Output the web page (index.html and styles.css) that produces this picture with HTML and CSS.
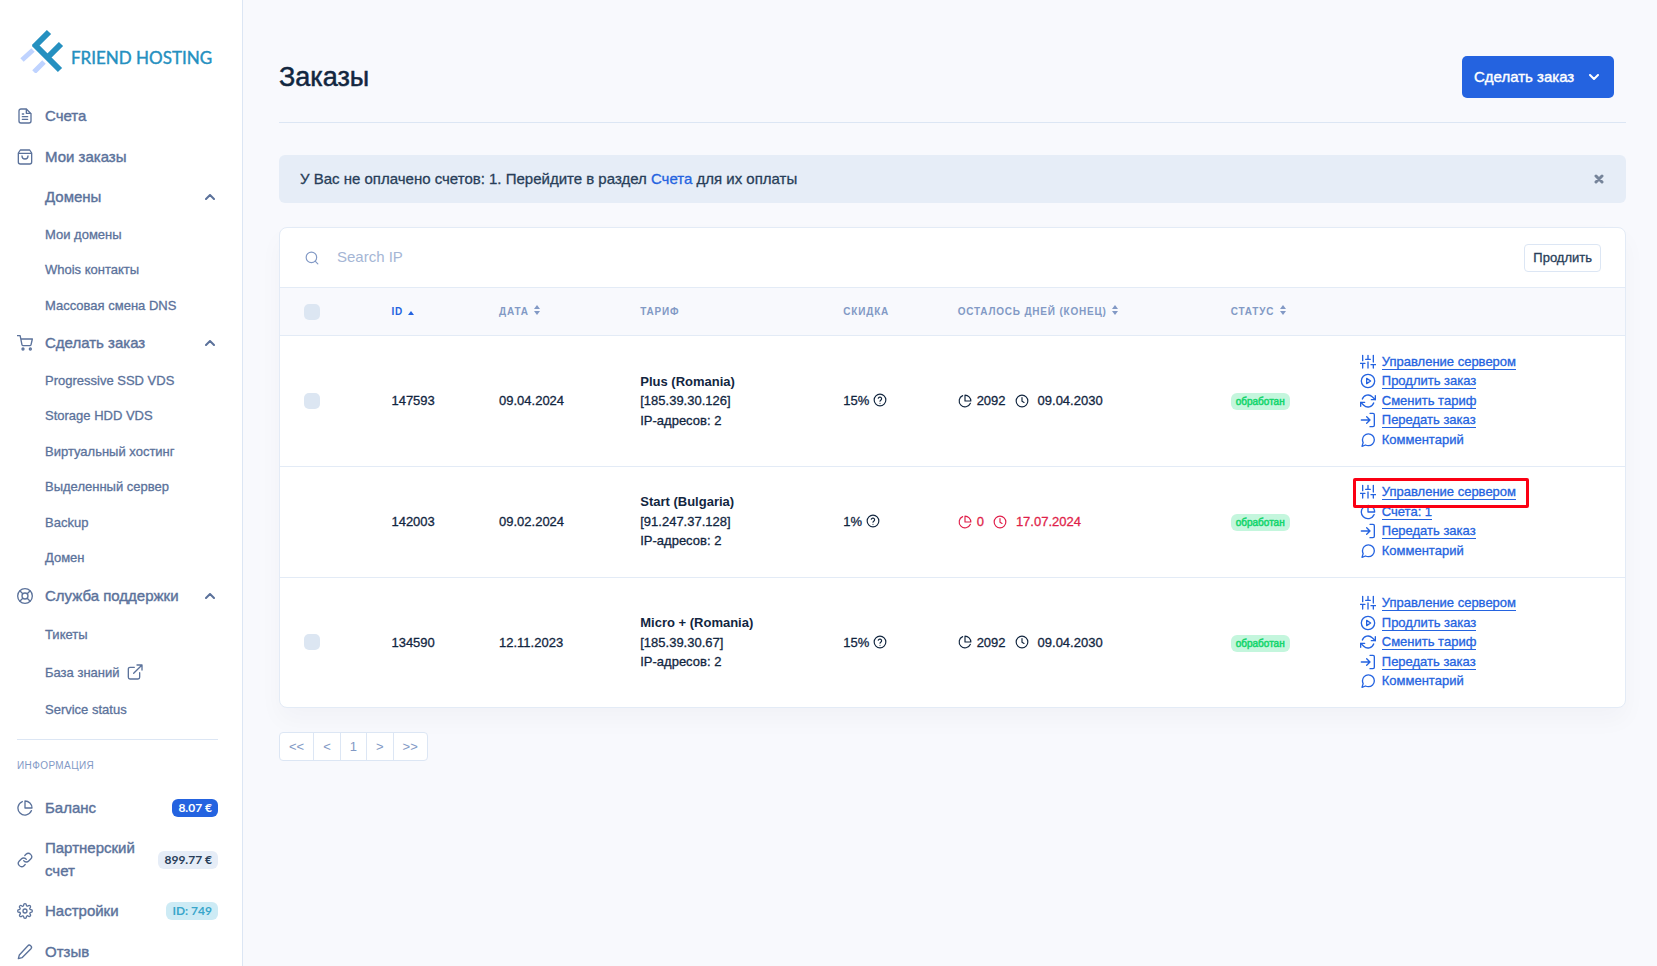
FILE: index.html
```html
<!DOCTYPE html>
<html lang="ru">
<head>
<meta charset="utf-8">
<meta name="viewport" content="width=device-width, initial-scale=1">
<title>Заказы</title>
<link rel="stylesheet" href="styles.css">
</head>
<body>
<svg class="sprite" aria-hidden="true">
  <symbol id="file" viewBox="0 0 24 24"><path d="M14 1.500H6a3 3 0 0 0-3 3v15a3 3 0 0 0 3 3h12a3 3 0 0 0 3-3v-11z"/><path d="M14 2v6h6.500M16 13H8M16 17H8M10 9H8"/></symbol>
  <symbol id="bag" viewBox="0 0 24 24"><path d="M5 1.500h14l3 4.500v13.500a3 3 0 0 1-3 3H5a3 3 0 0 1-3-3V6zM2 6.500h20M16.500 10.500a4.500 4.500 0 0 1-9 0"/></symbol>
  <symbol id="cart" viewBox="0 0 24 24"><circle cx="9" cy="21" r="1.500"/><circle cx="20" cy="21" r="1.500"/><path d="M.5 1h4.200l2.700 13.400a2 2 0 0 0 2 1.600h9.700a2 2 0 0 0 2-1.600L23 6H6"/></symbol>
  <symbol id="buoy" viewBox="0 0 24 24"><circle cx="12" cy="12" r="11"/><circle cx="12" cy="12" r="4.500"/><path d="M4.500 4.500l4.200 4.200M15.300 15.300l4.200 4.200M15.300 8.700l4.200-4.200M4.500 19.500l4.200-4.200"/></symbol>
  <symbol id="external" viewBox="0 0 24 24"><path d="M19 13v7a2.500 2.500 0 0 1-2.500 2.500h-12A2.500 2.500 0 0 1 2 20V7.500A2.500 2.500 0 0 1 4.500 5H11M15 1.500h7.500V9M10 14L22.500 1.500"/></symbol>
  <symbol id="balance" viewBox="0 0 24 24"><path d="M21.700 15.900A10.500 10.500 0 1 1 8 2.300M22.500 12A10.500 10.500 0 0 0 12 1.500V12z"/></symbol>
  <symbol id="pie" viewBox="0 0 24 24"><path d="M21.210 15.890A10 10 0 1 1 8 2.830M22 12A10 10 0 0 0 12 2v10z"/></symbol>
  <symbol id="link" viewBox="0 0 24 24"><path d="M10 13a5 5 0 0 0 7.540.54l3-3a5 5 0 0 0-7.070-7.070l-1.720 1.710"/><path d="M14 11a5 5 0 0 0-7.540-.54l-3 3a5 5 0 0 0 7.070 7.070l1.710-1.710"/></symbol>
  <symbol id="gear" viewBox="0 0 24 24"><circle cx="12" cy="12" r="3"/><path d="M19.400 15a1.650 1.650 0 0 0 .33 1.820l.06.06a2 2 0 1 1-2.830 2.830l-.06-.06a1.650 1.650 0 0 0-2.800 1.170V21a2 2 0 0 1-4 0v-.09a1.650 1.650 0 0 0-2.910-1.080l-.06.06a2 2 0 1 1-2.830-2.830l.06-.06A1.650 1.650 0 0 0 3.090 14H3a2 2 0 0 1 0-4h.09A1.650 1.650 0 0 0 4.270 7.180l-.06-.06a2 2 0 1 1 2.830-2.830l.06.06A1.650 1.650 0 0 0 10 3.090V3a2 2 0 0 1 4 0v.09a1.650 1.650 0 0 0 2.820 1.170l.06-.06a2 2 0 1 1 2.830 2.830l-.06.06A1.650 1.650 0 0 0 20.910 10H21a2 2 0 0 1 0 4h-.09a1.650 1.650 0 0 0-1.510 1z"/></symbol>
  <symbol id="pencil" viewBox="0 0 24 24"><path d="M16 3a2.800 2.800 0 0 1 5 4L7.500 20.500 2 22l1.500-5.500z"/></symbol>
  <symbol id="search" viewBox="0 0 24 24"><circle cx="11" cy="11" r="9"/><path d="M22 22l-4.600-4.600"/></symbol>
  <symbol id="help" viewBox="0 0 24 24"><circle cx="12" cy="12" r="10"/><path d="M9 9a3 3 0 0 1 5.800 1c0 2-2.800 2.500-2.800 4M12 17.500v.1"/></symbol>
  <symbol id="clock" viewBox="0 0 24 24"><circle cx="12" cy="12" r="10"/><path d="M12 6v6.500l3.500 2"/></symbol>
  <symbol id="sliders" viewBox="0 0 24 24"><path d="M4 21v-7M4 10V2M12 21v-9M12 8V2M20 21v-5M20 12V2M.5 14h7M8.500 8h7M16.500 16h7"/></symbol>
  <symbol id="play" viewBox="0 0 24 24"><circle cx="12" cy="12" r="10"/><path d="M10 8l6 4-6 4z"/></symbol>
  <symbol id="refresh" viewBox="0 0 24 24"><path d="M23 4v6h-6M1 20v-6h6"/><path d="M3.510 9a9 9 0 0 1 14.850-3.360L23 10M1 14l4.640 4.360A9 9 0 0 0 20.490 15"/></symbol>
  <symbol id="login" viewBox="0 0 24 24"><path d="M15 2h4.500a2 2 0 0 1 2 2v16a2 2 0 0 1-2 2H15M10 17l5-5-5-5M15 12H2"/></symbol>
  <symbol id="comment" viewBox="0 0 24 24"><path d="M21.500 11.500a9 9 0 0 1-9 9 9.400 9.400 0 0 1-4.200-1L3 21.500l1.700-5.600a9 9 0 0 1-1-4.100 9 9 0 0 1 8.800-9.100 9 9 0 0 1 9 8.800z"/></symbol>
  <symbol id="up" viewBox="0 0 10 6"><path d="M1 5l4-4 4 4"/></symbol>
  <symbol id="down" viewBox="0 0 10 6"><path d="M1 1l4 4 4-4"/></symbol>
  <symbol id="sort" viewBox="0 0 6 10"><path class="solid" d="M3 0l3 4H0zM3 10L0 6h6z"/></symbol>
  <symbol id="sort-up" viewBox="0 0 6 4"><path class="solid" d="M3 0l3 4H0z"/></symbol>
</svg>

<div class="layout">
  <aside class="sidebar">
    <a class="logo" href="#">
      <svg class="logo-mark" viewBox="0 0 44 44" aria-hidden="true">
        <g stroke="#bfd3ff" stroke-width="5"><path d="M2 31l11-10M14 43l10-10"/></g>
        <g stroke="#2590c0" stroke-width="6"><path d="M29 3L14 18M41 15L28 28M14 15l26 26"/></g>
      </svg>
      <span>FRIEND HOSTING</span>
    </a>
    <nav class="nav" aria-label="Меню">
      <a class="item" href="#"><svg class="icon"><use href="#file"/></svg><span>Счета</span></a>
      <a class="item" href="#"><svg class="icon"><use href="#bag"/></svg><span>Мои заказы</span></a>
      <button class="item" type="button" aria-expanded="true"><i class="icon"></i><span>Домены</span><svg class="caret"><use href="#up"/></svg></button>
      <a class="sub" href="#">Мои домены</a>
      <a class="sub" href="#">Whois контакты</a>
      <a class="sub" href="#">Массовая смена DNS</a>
      <button class="item" type="button" aria-expanded="true"><svg class="icon"><use href="#cart"/></svg><span>Сделать заказ</span><svg class="caret"><use href="#up"/></svg></button>
      <a class="sub" href="#">Progressive SSD VDS</a>
      <a class="sub" href="#">Storage HDD VDS</a>
      <a class="sub" href="#">Виртуальный хостинг</a>
      <a class="sub" href="#">Выделенный сервер</a>
      <a class="sub" href="#">Backup</a>
      <a class="sub" href="#">Домен</a>
      <button class="item" type="button" aria-expanded="true"><svg class="icon"><use href="#buoy"/></svg><span>Служба поддержки</span><svg class="caret"><use href="#up"/></svg></button>
      <a class="sub tall" href="#">Тикеты</a>
      <a class="sub tall" href="#">База знаний <svg class="icon"><use href="#external"/></svg></a>
      <a class="sub tall" href="#">Service status</a>
    </nav>
    <h2 class="section">Информация</h2>
    <nav class="nav" aria-label="Информация">
      <a class="item" href="#"><svg class="icon"><use href="#balance"/></svg><span>Баланс</span><b class="pill primary">8.07 €</b></a>
      <a class="item" href="#"><svg class="icon"><use href="#link"/></svg><span>Партнерский счет</span><b class="pill soft">899.77 €</b></a>
      <a class="item" href="#"><svg class="icon"><use href="#gear"/></svg><span>Настройки</span><b class="pill info">ID: 749</b></a>
      <a class="item" href="#"><svg class="icon"><use href="#pencil"/></svg><span>Отзыв</span></a>
    </nav>
  </aside>

  <main class="main">
    <header class="header">
      <h1>Заказы</h1>
      <button class="order" type="button">Сделать заказ <svg class="caret"><use href="#down"/></svg></button>
    </header>

    <div class="alert" role="alert">
      <p>У Вас не оплачено счетов: 1. Перейдите в раздел <a href="#">Счета</a> для их оплаты</p>
      <button class="close" type="button" aria-label="Закрыть"><svg viewBox="0 0 10 10"><path d="M2 2l6 6M8 2L2 8"/></svg></button>
    </div>

    <section class="card">
      <div class="toolbar">
        <label for="ip" aria-label="Search IP"><svg class="icon"><use href="#search"/></svg></label>
        <input id="ip" type="text" placeholder="Search IP">
        <button class="renew" type="button">Продлить</button>
      </div>
      <table>
        <colgroup><col class="c-check"><col class="c-id"><col class="c-date"><col class="c-plan"><col class="c-sale"><col class="c-days"><col class="c-status"><col></colgroup>
        <thead>
          <tr>
            <th><input type="checkbox" aria-label="Выбрать все"></th>
            <th class="sorted">ID <svg class="sort one"><use href="#sort-up"/></svg></th>
            <th>Дата <svg class="sort"><use href="#sort"/></svg></th>
            <th>Тариф</th>
            <th>Скидка</th>
            <th>Осталось дней (конец) <svg class="sort"><use href="#sort"/></svg></th>
            <th>Статус <svg class="sort"><use href="#sort"/></svg></th>
            <th></th>
          </tr>
        </thead>
        <tbody>
          <tr>
            <td><input type="checkbox" aria-label="147593"></td>
            <td>147593</td>
            <td>09.04.2024</td>
            <td><strong>Plus (Romania)</strong><br>[185.39.30.126]<br>IP-адресов: 2</td>
            <td>15% <svg class="mini"><use href="#help"/></svg></td>
            <td><div class="term"><svg class="mini"><use href="#pie"/></svg><span>2092</span><svg class="mini"><use href="#clock"/></svg><span>09.04.2030</span></div></td>
            <td><span class="status">обработан</span></td>
            <td>
              <ul class="actions">
                <li><svg class="icon"><use href="#sliders"/></svg><a href="#">Управление сервером</a></li>
                <li><svg class="icon"><use href="#play"/></svg><a href="#">Продлить заказ</a></li>
                <li><svg class="icon"><use href="#refresh"/></svg><a href="#">Сменить тариф</a></li>
                <li><svg class="icon"><use href="#login"/></svg><a href="#">Передать заказ</a></li>
                <li><svg class="icon"><use href="#comment"/></svg><a class="plain" href="#">Комментарий</a></li>
              </ul>
            </td>
          </tr>
          <tr>
            <td></td>
            <td>142003</td>
            <td>09.02.2024</td>
            <td><strong>Start (Bulgaria)</strong><br>[91.247.37.128]<br>IP-адресов: 2</td>
            <td>1% <svg class="mini"><use href="#help"/></svg></td>
            <td><div class="term expired"><svg class="mini"><use href="#pie"/></svg><span>0</span><svg class="mini"><use href="#clock"/></svg><span>17.07.2024</span></div></td>
            <td><span class="status">обработан</span></td>
            <td>
              <ul class="actions">
                <li class="marked"><svg class="icon"><use href="#sliders"/></svg><a href="#">Управление сервером</a></li>
                <li><svg class="icon"><use href="#pie"/></svg><a href="#">Счета: 1</a></li>
                <li><svg class="icon"><use href="#login"/></svg><a href="#">Передать заказ</a></li>
                <li><svg class="icon"><use href="#comment"/></svg><a class="plain" href="#">Комментарий</a></li>
              </ul>
            </td>
          </tr>
          <tr>
            <td><input type="checkbox" aria-label="134590"></td>
            <td>134590</td>
            <td>12.11.2023</td>
            <td><strong>Micro + (Romania)</strong><br>[185.39.30.67]<br>IP-адресов: 2</td>
            <td>15% <svg class="mini"><use href="#help"/></svg></td>
            <td><div class="term"><svg class="mini"><use href="#pie"/></svg><span>2092</span><svg class="mini"><use href="#clock"/></svg><span>09.04.2030</span></div></td>
            <td><span class="status">обработан</span></td>
            <td>
              <ul class="actions">
                <li><svg class="icon"><use href="#sliders"/></svg><a href="#">Управление сервером</a></li>
                <li><svg class="icon"><use href="#play"/></svg><a href="#">Продлить заказ</a></li>
                <li><svg class="icon"><use href="#refresh"/></svg><a href="#">Сменить тариф</a></li>
                <li><svg class="icon"><use href="#login"/></svg><a href="#">Передать заказ</a></li>
                <li><svg class="icon"><use href="#comment"/></svg><a class="plain" href="#">Комментарий</a></li>
              </ul>
            </td>
          </tr>
        </tbody>
      </table>
    </section>

    <nav class="pages" aria-label="Страницы">
      <a href="#">&lt;&lt;</a><a href="#">&lt;</a><a href="#">1</a><a href="#">&gt;</a><a href="#">&gt;&gt;</a>
    </nav>
  </main>
</div>
</body>
</html>
```
FILE: styles.css
```css
*,
*::after {
  box-sizing: border-box;
}

body {
  margin: 0;
  background: #f8f9fd;
  color: #12263f;
  font-family: "Liberation Sans", Arial, sans-serif;
  font-size: 15px;
  line-height: 1.5;
}

button,
input {
  font: inherit;
  color: inherit;
}

button {
  cursor: pointer;
}

a {
  color: #2463e0;
  text-decoration: none;
}

svg {
  flex: none;
  fill: none;
  stroke: currentColor;
  stroke-width: 2;
  stroke-linecap: round;
  stroke-linejoin: round;
}

.sprite {
  display: none;
}

.solid {
  fill: currentColor;
  stroke: none;
}

.layout {
  display: grid;
  grid-template-columns: 243px minmax(0, 1fr);
}

/* Sidebar */

.sidebar {
  position: sticky;
  top: 0;
  height: 100vh;
  overflow-y: auto;
  scrollbar-width: none;
  padding: 28px 24px 0 17px;
  background: #fff;
  border-right: 1px solid #dce6f4;
  color: #5b729b;
}

.logo {
  display: flex;
  align-items: center;
  gap: 7px;
  height: 46px;
  margin: 0 0 22px 3px;
  color: #2590c0;
  font-family: Lato, sans-serif;
  font-size: 17px;
  white-space: nowrap;
  -webkit-text-stroke: 0.4px currentColor;
}

.logo span {
  padding-top: 14px;
}

.logo-mark {
  width: 44px;
  height: 44px;
  stroke-linecap: butt;
}

.nav {
  display: flex;
  flex-direction: column;
}

.item {
  display: flex;
  align-items: center;
  gap: 12px;
  width: 100%;
  padding: 9px 0;
  border: 0;
  background: none;
  color: inherit;
  text-align: left;
  -webkit-text-stroke: 0.4px currentColor;
}

.item span {
  flex: 1;
}

.icon {
  width: 16px;
  height: 16px;
}

.caret {
  width: 10px;
  height: 6px;
  margin-right: 3px;
}

.sub {
  display: flex;
  align-items: center;
  gap: 7px;
  padding: 8px 0 8px 28px;
  color: inherit;
  font-size: 13px;
  -webkit-text-stroke: 0.3px currentColor;
}

.item + .sub {
  padding-top: 7px;
}

.sub.tall {
  padding-top: 9px;
  padding-bottom: 9px;
}

.section {
  margin: 10px 0 0;
  padding: 18px 0 15px;
  border-top: 1px solid #dce6f4;
  color: #8299c5;
  font-size: 10px;
  font-weight: 400;
  letter-spacing: 0.04em;
  text-transform: uppercase;
}

.pill {
  padding: 0 6px;
  border-radius: 6px;
  font-family: Lato, sans-serif;
  font-size: 12px;
  line-height: 18px;
  white-space: nowrap;
  -webkit-text-stroke: 0;
}

.primary {
  background: #2463e0;
  color: #fff;
}

.soft {
  background: #e6edf7;
  color: #283e59;
}

.info {
  background: #cdebf5;
  color: #39a6cb;
}

/* Main column */

.main {
  padding: 32px 31px 32px 36px;
}

.header {
  display: flex;
  align-items: center;
  justify-content: space-between;
  height: 91px;
  padding-right: 12px;
  border-bottom: 1px solid #dce6f4;
}

h1 {
  margin: 0;
  font-size: 27px;
  font-weight: 400;
  line-height: 1;
  -webkit-text-stroke: 0.5px currentColor;
}

.order {
  display: flex;
  align-items: center;
  justify-content: space-between;
  min-width: 152px;
  height: 42px;
  padding: 0 12px;
  border: 0;
  border-radius: 5px;
  background: #2463e0;
  color: #fff;
  -webkit-text-stroke: 0.4px currentColor;
}

.alert {
  display: flex;
  align-items: center;
  justify-content: space-between;
  height: 48px;
  margin-top: 32px;
  padding: 0 22px 0 21px;
  border-radius: 6px;
  background: #e6edf7;
  color: #283e59;
}

.alert p {
  margin: 0;
  -webkit-text-stroke: 0.3px currentColor;
}

.close {
  display: flex;
  padding: 0;
  border: 0;
  background: none;
  color: #76849a;
}

.close svg {
  width: 10px;
  height: 10px;
  stroke-width: 3;
}

.card {
  margin-top: 24px;
  border: 1px solid #e3ebf6;
  border-radius: 8px;
  background: #fff;
  box-shadow: 0 12px 24px rgba(18, 38, 63, 0.03);
  font-size: 13px;
}

.toolbar {
  display: flex;
  align-items: center;
  height: 59px;
  padding: 0 24px;
}

.toolbar label {
  display: flex;
  padding-left: 1px;
  color: #8299c5;
}

.toolbar .icon {
  width: 14px;
  height: 14px;
}

.toolbar input {
  flex: 1;
  margin-left: 18px;
  padding: 0;
  border: 0;
  outline: 0;
  background: none;
  font-size: 15px;
}

.toolbar input::placeholder {
  color: #a5b6d5;
  opacity: 1;
}

.renew {
  height: 28px;
  padding: 0 8px;
  border: 1px solid #dce6f4;
  border-radius: 4px;
  background: #fff;
  color: #283e59;
  -webkit-text-stroke: 0.3px currentColor;
}

table {
  width: 100%;
  border-collapse: collapse;
  table-layout: fixed;
}

.c-check { width: 6.5%; }
.c-id { width: 8%; }
.c-date { width: 10.5%; }
.c-plan { width: 15.1%; }
.c-sale { width: 8.5%; }
.c-days { width: 20.3%; }
.c-status { width: 9.6%; }

th,
td {
  padding: 16px 0 16px 24px;
  border-top: 1px solid #e3ebf6;
  text-align: left;
  vertical-align: middle;
}

td {
  -webkit-text-stroke: 0.3px currentColor;
}

strong {
  -webkit-text-stroke: 0;
}

th {
  height: 48px;
  padding-top: 0;
  padding-bottom: 0;
  background: #f8f9fd;
  color: #8299c5;
  font-size: 10px;
  letter-spacing: 0.08em;
  text-transform: uppercase;
  white-space: nowrap;
}

.sorted {
  color: #2463e0;
}

.sort {
  width: 6px;
  height: 10px;
  margin-left: 2px;
}

.sort.one {
  height: 4px;
  margin-left: 1px;
}

input[type="checkbox"] {
  appearance: none;
  display: block;
  width: 16px;
  height: 16px;
  margin: 0;
  border-radius: 5px;
  background: #dce6f2;
}

.mini {
  width: 14px;
  height: 14px;
  vertical-align: -2px;
}

.term {
  display: flex;
  align-items: center;
}

.term span {
  margin: 0 9px 0 5px;
}

.term span:last-child {
  margin: 0 0 0 9px;
}

.expired {
  color: #e01f4a;
}

.status {
  display: inline-block;
  padding: 0 5px;
  border-radius: 6px;
  background: #c4f6dd;
  color: #14d56c;
  font-size: 10px;
  line-height: 17px;
  -webkit-text-stroke: 0.5px currentColor;
}

.actions {
  margin: 0;
  padding: 0;
  list-style: none;
  color: #2463e0;
}

.actions li {
  display: flex;
  align-items: center;
  gap: 6px;
  height: 1.5em;
  white-space: nowrap;
  position: relative;
}

.actions a {
  line-height: 15px;
  border-bottom: 1px solid currentColor;
}

.actions .plain {
  border-color: transparent;
}

.marked::after {
  content: "";
  position: absolute;
  z-index: 1;
  left: -7px;
  top: -5px;
  width: 176px;
  height: 30px;
  border: 3px solid #fb0013;
  border-radius: 2px;
}

/* Pagination */

.pages {
  display: flex;
  width: max-content;
  margin-top: 24px;
  border: 1px solid #dce6f4;
  border-radius: 4px;
  background: #fff;
}

.pages a {
  padding: 0 9px;
  color: #8299c5;
  font-size: 13px;
  line-height: 27px;
}

.pages a + a {
  border-left: 1px solid #dce6f4;
}
```
